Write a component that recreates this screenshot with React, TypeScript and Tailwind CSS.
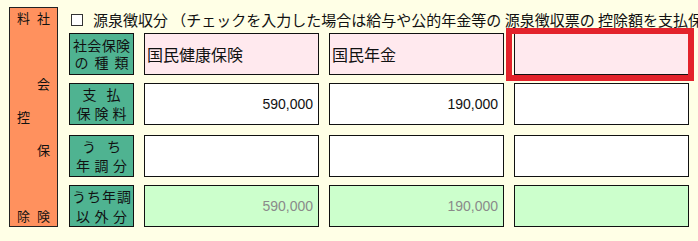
import React from 'react';

const jp = { fontFamily: '"Noto Sans CJK JP", "Noto Sans", sans-serif' };

// characters spread evenly across a fixed width
const Spread: React.FC<{ text: string; w: number }> = ({ text, w }) => (
  <div className="mx-auto flex justify-between" style={{ width: w }}>
    {text.split('').map((c, i) => (
      <span key={i}>{c}</span>
    ))}
  </div>
);

type Row = {
  label: [string, number][];
  lead: string;
  kind: 'name' | 'num' | 'gray';
  values: string[];
  mt: string;
};

const rows: Row[] = [
  { label: [['社会保険', 57], ['の種類', 54]], lead: 'leading-[17px]', kind: 'name', values: ['国民健康保険', '国民年金', ''], mt: '' },
  { label: [['支払', 38], ['保険料', 50]], lead: 'leading-[19px]', kind: 'num', values: ['590,000', '190,000', ''], mt: 'mt-[8px]' },
  { label: [['うち', 39], ['年調分', 51]], lead: 'leading-[19px]', kind: 'num', values: ['', '', ''], mt: 'mt-[10px]' },
  { label: [['うち年調', 59], ['以外分', 51]], lead: 'leading-[20px]', kind: 'gray', values: ['590,000', '190,000', ''], mt: 'mt-[8px]' },
];

const Cell: React.FC<{ kind: Row['kind']; value: string; highlight?: boolean }> = ({ kind, value, highlight }) => {
  const bg = kind === 'name' ? 'bg-[#ffe9ee]' : kind === 'gray' ? 'bg-[#ccffcc]' : 'bg-white';
  return (
    <div className={`relative h-full w-[175px] border border-[#111] ${bg}`}>
      {kind === 'name' ? (
        <div className="flex h-full items-center pl-[2px] text-[16px] text-[#111]" style={jp}>
          {value}
        </div>
      ) : (
        <div
          className={`flex h-full items-center justify-end pr-[5px] text-[14px] ${kind === 'gray' ? 'text-[#8a8a8a]' : 'text-[#111]'}`}
          style={{ fontFamily: '"Liberation Sans", Arial, sans-serif' }}
        >
          {value}
        </div>
      )}
      {highlight && (
        <div className="pointer-events-none absolute top-[-6px] right-[-6px] bottom-[-7px] left-[-9px] border-[6px] border-[#e3232b]" />
      )}
    </div>
  );
};

export default function App() {
  return (
    <div className="h-[241px] w-[698px] overflow-hidden bg-[#ffffe6] text-[#111]" style={jp}>
      <div className="flex pt-[7px] pl-[9px]">
        {/* 社会保険料控除 side label */}
        <div className="flex h-[220px] w-[49px] shrink-0 flex-row-reverse justify-between border border-[#222] bg-[#ff915e] px-[7px] py-[2px] text-[13px] leading-[16px]">
          <div className="flex flex-col justify-between">
            <span>社</span>
            <span>会</span>
            <span>保</span>
            <span>険</span>
          </div>
          <div className="flex flex-col justify-between">
            <span>料</span>
            <span>控</span>
            <span>除</span>
          </div>
        </div>

        <div className="ml-[11px] flex flex-col">
          <div className="flex h-[26px] items-center whitespace-nowrap text-[15px]">
            <span className="ml-[2px] mr-[10px] h-[12px] w-[12px] shrink-0 border border-[#333] bg-white" />
            <span>源泉徴収分 （チェックを入力した場合は給与や公的年金等の 源泉徴収票の 控除額を支払保険料に入力）</span>
          </div>

          {rows.map((r, ri) => (
            <div key={ri} className={`flex h-[42px] gap-[10px] ${r.mt}`}>
              <div className={`flex h-full w-[65px] shrink-0 flex-col justify-center border border-[#111] bg-[#4fb391] text-[14px] ${r.lead}`}>
                {r.label.map(([t, w], li) => (
                  <Spread key={li} text={t} w={w} />
                ))}
              </div>
              {r.values.map((v, ci) => (
                <Cell key={ci} kind={r.kind} value={v} highlight={ri === 0 && ci === 2} />
              ))}
            </div>
          ))}
        </div>
      </div>
    </div>
  );
}
